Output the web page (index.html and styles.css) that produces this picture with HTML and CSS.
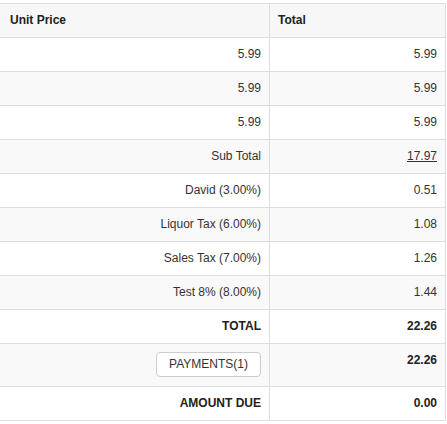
FILE: index.html
```html
<!DOCTYPE html>
<html>
<head>
<meta charset="utf-8">
<link rel="stylesheet" href="styles.css">
</head>
<body>
<table class="totals">
  <colgroup><col class="c1"><col class="c2"></colgroup>
  <tbody>
    <tr class="head"><th class="first">Unit Price</th><th>Total</th></tr>
    <tr><td class="num">5.99</td><td class="num">5.99</td></tr>
    <tr class="alt"><td class="num">5.99</td><td class="num">5.99</td></tr>
    <tr><td class="num">5.99</td><td class="num">5.99</td></tr>
    <tr class="alt"><td class="num">Sub Total</td><td class="num"><a class="link">17.97</a></td></tr>
    <tr><td class="num">David (3.00%)</td><td class="num">0.51</td></tr>
    <tr class="alt"><td class="num">Liquor Tax (6.00%)</td><td class="num">1.08</td></tr>
    <tr><td class="num">Sales Tax (7.00%)</td><td class="num">1.26</td></tr>
    <tr class="alt"><td class="num">Test 8% (8.00%)</td><td class="num">1.44</td></tr>
    <tr class="bold"><td class="num">TOTAL</td><td class="num">22.26</td></tr>
    <tr class="alt pay"><td class="num"><button class="btn">PAYMENTS(1)</button></td><td class="num strong">22.26</td></tr>
    <tr class="bold"><td class="num">AMOUNT DUE</td><td class="num">0.00</td></tr>
  </tbody>
</table>
</body>
</html>
```
FILE: styles.css
```css
html, body {
  margin: 0;
  padding: 0;
  background: #fff;
}
body {
  padding-top: 3px;
  font-family: "Liberation Sans", Arial, sans-serif;
  font-size: 12px;
  line-height: 17px;
  color: #333;
}
.totals {
  border-collapse: separate;
  border-spacing: 0;
  width: 446px;
  table-layout: fixed;
  border-top: 1px solid #ddd;
  border-right: 1px solid #ddd;
}
.c1 { width: 270px; }
.c2 { width: 175px; }
.totals th,
.totals td {
  box-sizing: border-box;
  padding: 8px;
  border-bottom: 1px solid #ddd;
  vertical-align: top;
}
.totals tr > :first-child {
  border-right: 1px solid #ddd;
}
.totals th {
  text-align: left;
  font-weight: bold;
  color: #222;
  background: #f7f7f7;
}
.totals th.first {
  padding-left: 10px;
}
.num { text-align: right; }
.alt td { background: #f9f9f9; }
.bold td, .strong {
  font-weight: bold;
  color: #222;
}
.link {
  color: #333;
  text-decoration: underline;
}
.pay td { padding-bottom: 9px; }
.btn {
  display: inline-block;
  vertical-align: top;
  box-sizing: border-box;
  height: 25px;
  width: 105px;
  margin: 0;
  padding: 0 11px;
  font-family: "Liberation Sans", Arial, sans-serif;
  font-size: 12px;
  line-height: 23px;
  color: #333;
  background: #fff;
  border: 1px solid #ccc;
  border-radius: 4px;
}
```
